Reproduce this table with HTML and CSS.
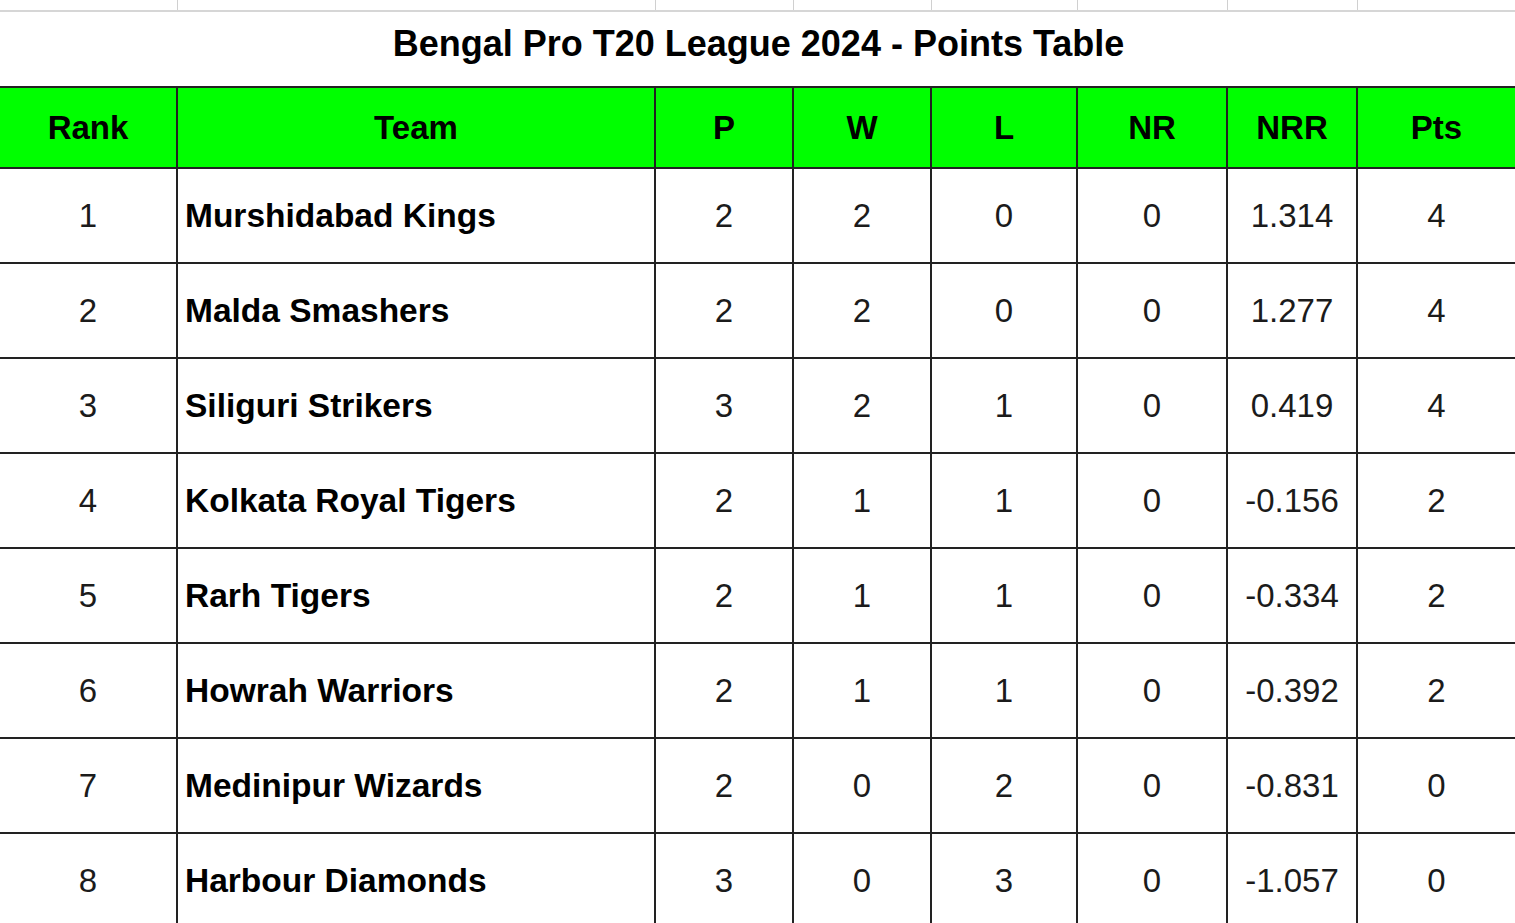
FILE: index.html
```html
<!DOCTYPE html>
<html lang="en">
<head>
<meta charset="utf-8">
<title>Bengal Pro T20 League 2024 - Points Table</title>
<link rel="stylesheet" href="styles.css">
</head>
<body>
<div class="sheet">
  <div class="strip">
    <span></span><span></span><span></span><span></span><span></span><span></span><span></span><span></span>
  </div>
  <div class="title">Bengal Pro T20 League 2024 - Points Table</div>
  <div class="grid">
    <div class="cell head">Rank</div>
    <div class="cell head">Team</div>
    <div class="cell head">P</div>
    <div class="cell head">W</div>
    <div class="cell head">L</div>
    <div class="cell head">NR</div>
    <div class="cell head">NRR</div>
    <div class="cell head">Pts</div>

    <div class="cell">1</div><div class="cell team">Murshidabad Kings</div><div class="cell">2</div><div class="cell">2</div><div class="cell">0</div><div class="cell">0</div><div class="cell">1.314</div><div class="cell">4</div>
    <div class="cell">2</div><div class="cell team">Malda Smashers</div><div class="cell">2</div><div class="cell">2</div><div class="cell">0</div><div class="cell">0</div><div class="cell">1.277</div><div class="cell">4</div>
    <div class="cell">3</div><div class="cell team">Siliguri Strikers</div><div class="cell">3</div><div class="cell">2</div><div class="cell">1</div><div class="cell">0</div><div class="cell">0.419</div><div class="cell">4</div>
    <div class="cell">4</div><div class="cell team">Kolkata Royal Tigers</div><div class="cell">2</div><div class="cell">1</div><div class="cell">1</div><div class="cell">0</div><div class="cell">-0.156</div><div class="cell">2</div>
    <div class="cell">5</div><div class="cell team">Rarh Tigers</div><div class="cell">2</div><div class="cell">1</div><div class="cell">1</div><div class="cell">0</div><div class="cell">-0.334</div><div class="cell">2</div>
    <div class="cell">6</div><div class="cell team">Howrah Warriors</div><div class="cell">2</div><div class="cell">1</div><div class="cell">1</div><div class="cell">0</div><div class="cell">-0.392</div><div class="cell">2</div>
    <div class="cell">7</div><div class="cell team">Medinipur Wizards</div><div class="cell">2</div><div class="cell">0</div><div class="cell">2</div><div class="cell">0</div><div class="cell">-0.831</div><div class="cell">0</div>
    <div class="cell">8</div><div class="cell team">Harbour Diamonds</div><div class="cell">3</div><div class="cell">0</div><div class="cell">3</div><div class="cell">0</div><div class="cell">-1.057</div><div class="cell">0</div>
  </div>
</div>
</body>
</html>
```
FILE: styles.css
```css
html, body {
  margin: 0;
  padding: 0;
  background: #ffffff;
}

body {
  font-family: "Liberation Sans", Arial, sans-serif;
  color: #1b1b1b;
  overflow: hidden;
}

.sheet {
  width: 1515px;
  height: 923px;
  overflow: hidden;
}

.strip,
.grid {
  display: grid;
  grid-template-columns: 178px 478px 138px 138px 146px 150px 130px 1fr;
}

.strip {
  height: 10px;
  border-bottom: 2px solid #d6d6d6;
}

.strip span {
  border-right: 1px solid #d0d0d0;
}

.strip span:last-child {
  border-right: none;
}

.title {
  height: 64px;
  padding-bottom: 10px;
  display: flex;
  align-items: center;
  justify-content: center;
  font-weight: bold;
  font-size: 36px;
  color: #000;
  padding-left: 2px;
}

.grid {
  border-top: 2px solid #222;
  grid-auto-rows: 95px;
  grid-template-rows: 81px;
}

.cell {
  display: flex;
  align-items: center;
  justify-content: center;
  border-right: 2px solid #222;
  border-bottom: 2px solid #222;
  font-size: 33px;
}

.cell:nth-child(8n) {
  border-right: none;
}

.head {
  background: #00ff00;
  font-weight: bold;
  color: #000;
}

.team {
  justify-content: flex-start;
  padding-left: 7px;
  font-weight: bold;
  font-size: 33.5px;
  color: #000;
}
```
